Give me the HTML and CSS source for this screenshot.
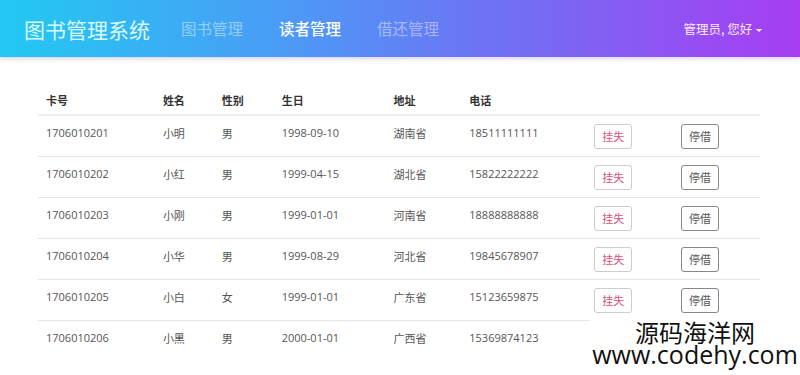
FILE: index.html
```html
<!DOCTYPE html>
<html lang="zh-CN">
<head>
    <meta charset="UTF-8">
    <title>图书管理系统</title>
    <link rel="stylesheet" href="styles.css">
</head>
<body>
    <nav class="navbar">
        <a class="brand" href="#">图书管理系统</a>
        <ul class="nav-links">
            <li><a href="#">图书管理</a></li>
            <li class="active"><a href="#">读者管理</a></li>
            <li><a href="#">借还管理</a></li>
        </ul>
        <div class="user-menu">管理员, 您好 <span class="caret"></span></div>
    </nav>

    <div class="content">
        <table class="reader-table">
            <thead>
                <tr>
                    <th class="col-card">卡号</th>
                    <th class="col-name">姓名</th>
                    <th class="col-sex">性别</th>
                    <th class="col-birth">生日</th>
                    <th class="col-addr">地址</th>
                    <th class="col-phone">电话</th>
                    <th class="col-btn"></th>
                    <th class="col-btn"></th>
                </tr>
            </thead>
            <tbody>
                <tr>
                    <td>1706010201</td><td>小明</td><td>男</td><td>1998-09-10</td><td>湖南省</td><td>18511111111</td>
                    <td><button class="btn btn-lost">挂失</button></td>
                    <td><button class="btn btn-stop">停借</button></td>
                </tr>
                <tr>
                    <td>1706010202</td><td>小红</td><td>男</td><td>1999-04-15</td><td>湖北省</td><td>15822222222</td>
                    <td><button class="btn btn-lost">挂失</button></td>
                    <td><button class="btn btn-stop">停借</button></td>
                </tr>
                <tr>
                    <td>1706010203</td><td>小刚</td><td>男</td><td>1999-01-01</td><td>河南省</td><td>18888888888</td>
                    <td><button class="btn btn-lost">挂失</button></td>
                    <td><button class="btn btn-stop">停借</button></td>
                </tr>
                <tr>
                    <td>1706010204</td><td>小华</td><td>男</td><td>1999-08-29</td><td>河北省</td><td>19845678907</td>
                    <td><button class="btn btn-lost">挂失</button></td>
                    <td><button class="btn btn-stop">停借</button></td>
                </tr>
                <tr>
                    <td>1706010205</td><td>小白</td><td>女</td><td>1999-01-01</td><td>广东省</td><td>15123659875</td>
                    <td><button class="btn btn-lost">挂失</button></td>
                    <td><button class="btn btn-stop">停借</button></td>
                </tr>
                <tr>
                    <td>1706010206</td><td>小黑</td><td>男</td><td>2000-01-01</td><td>广西省</td><td>15369874123</td>
                    <td></td>
                    <td></td>
                </tr>
            </tbody>
        </table>
    </div>

    <div class="watermark">
        <div class="wm-cn">源码海洋网</div>
        <div class="wm-url">www.codehy.com</div>
    </div>
</body>
</html>
```

FILE: styles.css
```css
body {
    margin: 0;
    font-family: "Open Sans", "Noto Sans CJK SC", sans-serif;
    color: #444;
    background: #fff;
    overflow: hidden;
}

/* top bar */
.navbar {
    display: flex;
    align-items: center;
    height: 57px;
    padding: 0 24px;
    background: linear-gradient(90deg, #22c9f2 0%, #4a9cf6 35%, #6c74f4 60%, #a83df2 100%);
    box-shadow: 0 2px 4px rgba(120, 80, 200, 0.25);
}
.brand {
    font-family: "Noto Sans CJK SC", sans-serif;
    font-size: 21px;
    color: #d8fbff;
    text-decoration: none;
    margin-right: 31px;
}
.nav-links {
    display: flex;
    list-style: none;
    margin: 0;
    padding: 0;
    gap: 36px;
}
.nav-links a {
    font-family: "Noto Sans CJK SC", sans-serif;
    font-size: 15.5px;
    color: rgba(255, 255, 255, 0.45);
    text-decoration: none;
}
.nav-links .active a {
    color: #fff;
    font-weight: 500;
}
.user-menu {
    margin-left: auto;
    margin-right: 14px;
    font-family: "Noto Sans CJK SC", sans-serif;
    font-size: 12.5px;
    color: #fbeaff;
}
.caret {
    display: inline-block;
    width: 0;
    height: 0;
    border-left: 3px solid transparent;
    border-right: 3px solid transparent;
    border-top: 3px solid #fff;
    vertical-align: middle;
    margin-left: 1px;
}

/* table */
.content {
    padding: 28px 40px 0 38px;
}
.reader-table {
    width: 100%;
    border-collapse: collapse;
    font-size: 11px;
}
.reader-table th {
    text-align: left;
    font-family: "Noto Sans CJK SC", sans-serif;
    font-weight: 700;
    color: #333;
    height: 29px;
    padding: 0 8px;
    border-bottom: 2px solid #eee;
}
.reader-table td {
    height: 40px;
    padding: 0 8px;
    border-bottom: 1px solid #e6e6e6;
    color: #555;
}
.reader-table tbody tr td:not(:nth-child(n+7)) {
    vertical-align: top;
    padding-top: 9px;
    box-sizing: border-box;
}
.reader-table tbody tr:last-child td {
    border-bottom: none;
}
.col-card { width: 101px; }
.col-name { width: 43px; }
.col-sex { width: 44px; }
.col-birth { width: 96px; }
.col-addr { width: 60px; }
.col-phone { width: 109px; }
.col-btn { width: 71px; }

.btn {
    font-family: "Noto Sans CJK SC", sans-serif;
    font-size: 11px;
    height: 25px;
    width: 38px;
    padding: 0;
    background: #fff;
    border: 1px solid #bbb;
    border-radius: 3px;
    cursor: pointer;
}
.btn-lost {
    color: #d9537a;
    border-color: #ccc;
}
.btn-stop {
    color: #555;
    border-color: #888;
}

/* watermark over bottom right */
.watermark {
    position: absolute;
    right: 0;
    bottom: 0;
    width: 210px;
    height: 57px;
    background: #fff;
    color: #111;
    font-family: "Noto Sans CJK SC", sans-serif;
    text-align: center;
}
.wm-cn {
    font-size: 24px;
    line-height: 25px;
    margin-top: 1px;
}
.wm-url {
    font-family: "Open Sans", sans-serif;
    font-size: 25px;
    line-height: 21px;
}
```
